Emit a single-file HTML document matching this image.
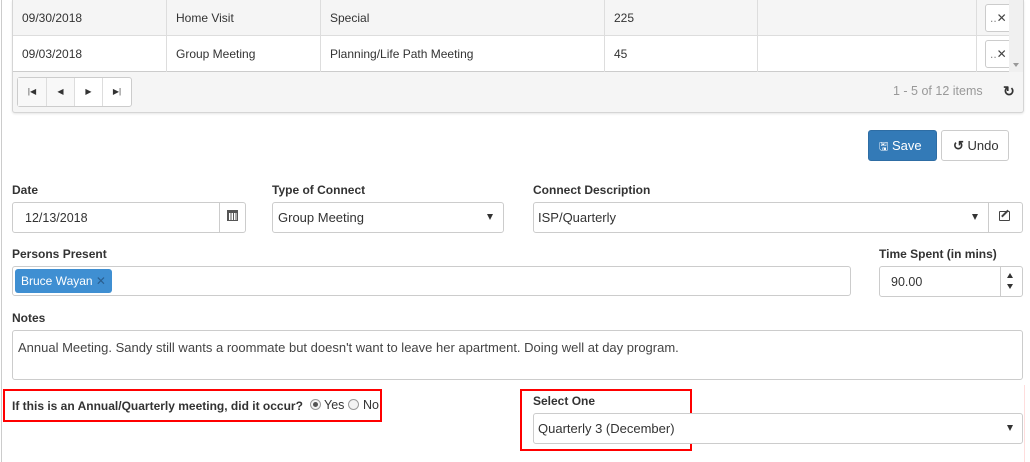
<!DOCTYPE html>
<html><head><meta charset="utf-8"><style>
*{box-sizing:border-box;margin:0;padding:0}
body{width:1030px;height:462px;background:#fff;font-family:"Liberation Sans",sans-serif;font-size:13px;color:#333;position:relative;overflow:hidden}
.a{position:absolute}
.lbl{position:absolute;font-weight:bold;font-size:12px;color:#333}
.inp{position:absolute;border:1px solid #ccc;border-radius:3px;background:#fff;font-size:13px;color:#333;padding-left:12px;display:flex;align-items:center}
.caret{position:absolute;width:0;height:0;border-left:3.5px solid transparent;border-right:3.5px solid transparent;border-top:6px solid #333}
.cell{position:absolute;top:0;height:36px;line-height:36px;padding-left:9px;border-right:1px solid #ddd;font-size:12px}
</style></head><body>
<div class="a" style="left:1px;top:0;width:1px;height:462px;background:#ccc"></div>
<div class="a" style="left:12px;top:0;width:1012px;height:113px;border:1px solid #d5d5d5;border-top:none;border-radius:0 0 3px 3px;background:#f5f5f5;box-shadow:0 1px 2px rgba(0,0,0,.1)"></div>
<div class="a" style="left:13px;top:0;width:996px;height:36px;background:#f5f5f5;border-bottom:1px solid #ddd">
 <div class="cell" style="left:0;width:154px">09/30/2018</div>
 <div class="cell" style="left:154px;width:154px">Home Visit</div>
 <div class="cell" style="left:308px;width:284px">Special</div>
 <div class="cell" style="left:592px;width:153px">225</div>
 <div class="cell" style="left:745px;width:219px"></div>
 <div class="a" style="left:972px;top:4px;width:30px;height:28px;border:1px solid #ccc;border-radius:3px;background:#fff;color:#888;font-size:12px;line-height:26px;padding-left:4px">..<span style="color:#444">✕</span></div>
</div>
<div class="a" style="left:13px;top:36px;width:996px;height:36px;background:#fff;border-bottom:1px solid #ccc">
 <div class="cell" style="left:0;width:154px">09/03/2018</div>
 <div class="cell" style="left:154px;width:154px">Group Meeting</div>
 <div class="cell" style="left:308px;width:284px">Planning/Life Path Meeting</div>
 <div class="cell" style="left:592px;width:153px">45</div>
 <div class="cell" style="left:745px;width:219px"></div>
 <div class="a" style="left:972px;top:4px;width:30px;height:28px;border:1px solid #ccc;border-radius:3px;background:#fff;color:#888;font-size:12px;line-height:26px;padding-left:4px">..<span style="color:#444">✕</span></div>
</div>
<div class="a" style="left:1009px;top:0;width:14px;height:72px;background:#f0f0f0"></div>
<div class="caret" style="left:1013px;top:63px;border-top-width:4px;border-top-color:#999"></div>
<div class="a" style="left:17px;top:77px;width:115px;height:30px;border:1px solid #ccc;border-radius:3px;background:#fff;display:flex;font-size:8px;color:#333">
 <div style="width:29px;border-right:1px solid #ddd;text-align:center;line-height:28px;background:#f8f8f8">|◀</div>
 <div style="width:28px;border-right:1px solid #ddd;text-align:center;line-height:28px;background:#f8f8f8">◀</div>
 <div style="width:28px;border-right:1px solid #ddd;text-align:center;line-height:28px">▶</div>
 <div style="width:28px;text-align:center;line-height:28px">▶|</div>
</div>
<div class="a" style="left:893px;top:84px;color:#999;font-size:12.5px">1 - 5 of 12 items</div>
<div class="a" style="left:1003px;top:83px;font-size:14px;font-weight:bold;color:#333">↻</div>
<div class="a" style="left:868px;top:130px;width:69px;height:31px;background:#337ab7;border:1px solid #2e6da4;border-radius:3px;color:#fff;font-size:13px;line-height:29px;padding-left:10px"><span style="font-size:11px">🖫</span> Save</div>
<div class="a" style="left:941px;top:130px;width:68px;height:31px;background:#fff;border:1px solid #ccc;border-radius:3px;color:#333;font-size:13px;line-height:29px;padding-left:11px"><b>↺</b> Undo</div>
<div class="lbl" style="left:12px;top:183px">Date</div>
<div class="inp" style="left:12px;top:202px;width:234px;height:31px;padding-left:12px;font-size:12.5px">12/13/2018</div>
<div class="a" style="left:219px;top:203px;width:1px;height:29px;background:#ccc"></div>
<div class="a" style="left:227px;top:210px;width:11px;height:11px;border:1px solid #555;border-top-width:3px;background:repeating-linear-gradient(90deg,#555 0 1px,#fff 1px 2.5px)"></div>
<div class="lbl" style="left:272px;top:183px">Type of Connect</div>
<div class="inp" style="left:272px;top:202px;width:232px;height:31px;padding-left:5px">Group Meeting</div>
<div class="caret" style="left:487px;top:214px"></div>
<div class="lbl" style="left:533px;top:183px">Connect Description</div>
<div class="inp" style="left:533px;top:202px;width:490px;height:31px;padding-left:4px">ISP/Quarterly</div>
<div class="caret" style="left:972px;top:214px"></div>
<div class="a" style="left:988px;top:203px;width:1px;height:29px;background:#ccc"></div>
<div class="a" style="left:999px;top:211px;width:11px;height:10px;border:1.5px solid #444;border-radius:1px"></div>
<div class="a" style="left:1004px;top:209px;width:2px;height:9px;background:#444;transform:rotate(45deg)"></div>
<div class="lbl" style="left:12px;top:247px">Persons Present</div>
<div class="inp" style="left:12px;top:266px;width:839px;height:30px;padding-left:2px">
 <div style="background:#3f8fd2;color:#fff;border-radius:3px;height:24px;line-height:24px;padding:0 6px;font-size:12px">Bruce Wayan <span style="color:#2a5f90">✕</span></div>
</div>
<div class="lbl" style="left:879px;top:247px">Time Spent (in mins)</div>
<div class="inp" style="left:879px;top:266px;width:144px;height:31px;padding-left:11px;font-size:12.5px">90.00</div>
<div class="a" style="left:1000px;top:267px;width:1px;height:29px;background:#ccc"></div>
<div class="a" style="left:1007px;top:273px;border-left:3.5px solid transparent;border-right:3.5px solid transparent;border-bottom:5px solid #333"></div>
<div class="caret" style="left:1007px;top:284px;border-top-width:5px"></div>
<div class="lbl" style="left:12px;top:311px">Notes</div>
<div class="a" style="left:12px;top:330px;width:1011px;height:50px;border:1px solid #ccc;border-radius:3px;padding:9px 0 0 5px;font-size:13px;color:#444">Annual Meeting. Sandy still wants a roommate but doesn't want to leave her apartment. Doing well at day program.</div>
<div class="a" style="left:3px;top:389px;width:379px;height:33px;border:2px solid #f00"></div>
<div class="a" style="left:12px;top:399px;font-weight:bold;font-size:12px;white-space:nowrap">If this is an Annual/Quarterly meeting, did it occur?</div>
<div class="a" style="left:310px;top:399px;width:11px;height:11px;border:1px solid #999;border-radius:50%;background:#f5f5f5"><div style="margin:2px;width:5px;height:5px;border-radius:50%;background:#555"></div></div>
<div class="a" style="left:324px;top:398px;font-size:12.5px">Yes</div>
<div class="a" style="left:348px;top:399px;width:11px;height:11px;border:1px solid #999;border-radius:50%;background:#f3f3f3"></div>
<div class="a" style="left:363px;top:398px;font-size:12.5px">No</div>
<div class="a" style="left:520px;top:389px;width:172px;height:62px;border:2px solid #f00"></div>
<div class="lbl" style="left:533px;top:394px">Select One</div>
<div class="inp" style="left:533px;top:413px;width:490px;height:31px;padding-left:4px">Quarterly 3 (December)</div>
<div class="caret" style="left:1007px;top:425px"></div>
<div class="a" style="left:1024px;top:385px;width:1px;height:77px;background:#fdd"></div>
</body></html>
